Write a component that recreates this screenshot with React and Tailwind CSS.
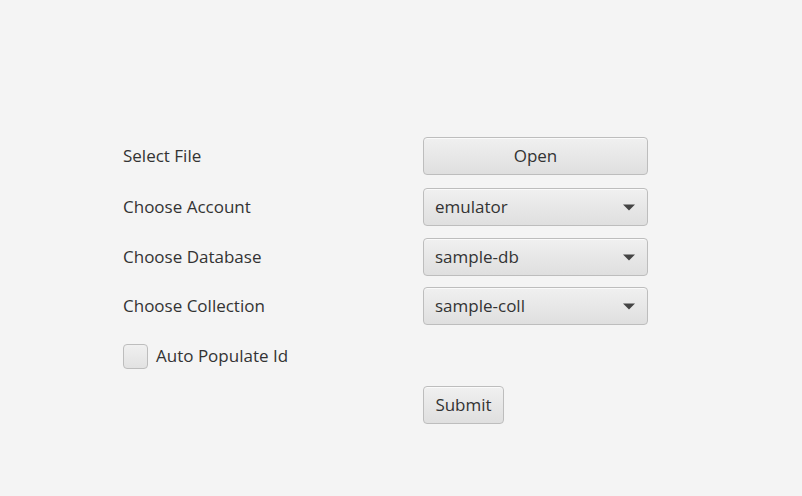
import React from "react";

const font = { fontFamily: '"Open Sans", "Noto Sans", sans-serif' };

function Arrow() {
  return (
    <svg width="12" height="7" viewBox="0 0 12 7" className="shrink-0">
      <path d="M0 0.5 L12 0.5 L6 6.5 Z" fill="#444444" />
    </svg>
  );
}

function Combo({ value }) {
  return (
    <div className="flex h-[38px] w-[225px] items-center justify-between rounded-[4px] border border-[#bdbdbd] bg-gradient-to-b from-[#f0f0f0] to-[#dfdfdf] pl-[11px] pr-[12px] text-[17px] text-[#333333] shadow-[inset_0_1px_0_#fafafa]">
      <span>{value}</span>
      <Arrow />
    </div>
  );
}

function Row({ label, children, className = "" }) {
  return (
    <div className={`flex h-[38px] items-center ${className}`}>
      <div className="w-[300px] text-[17px] text-[#333333]">{label}</div>
      {children}
    </div>
  );
}

export default function App() {
  return (
    <div className="h-[496px] w-[802px] bg-[#f4f4f4] pl-[123px] pt-[137px]" style={font}>
      <div className="flex flex-col gap-[12px]">
        <Row label="Select File" className="mb-[1px]">
          <div className="flex h-[38px] w-[225px] items-center justify-center rounded-[4px] border border-[#bdbdbd] bg-gradient-to-b from-[#f0f0f0] to-[#dfdfdf] text-[17px] text-[#333333] shadow-[inset_0_1px_0_#fafafa]">
            Open
          </div>
        </Row>
        <Row label="Choose Account">
          <Combo value="emulator" />
        </Row>
        <Row label="Choose Database" className="-mb-px">
          <Combo value="sample-db" />
        </Row>
        <Row label="Choose Collection">
          <Combo value="sample-coll" />
        </Row>
        <div className="flex h-[38px] items-center">
          <div className="h-[25px] w-[25px] rounded-[4px] border border-[#bdbdbd] bg-gradient-to-b from-[#f0f0f0] to-[#e2e2e2]" />
          <span className="ml-[8px] text-[17px] text-[#333333]">Auto Populate Id</span>
        </div>
        <div className="-mt-px flex h-[38px] items-center pl-[300px]">
          <div className="flex h-[38px] w-[81px] items-center justify-center rounded-[4px] border border-[#bdbdbd] bg-gradient-to-b from-[#f0f0f0] to-[#dfdfdf] text-[17px] text-[#333333] shadow-[inset_0_1px_0_#fafafa]">
            Submit
          </div>
        </div>
      </div>
    </div>
  );
}
